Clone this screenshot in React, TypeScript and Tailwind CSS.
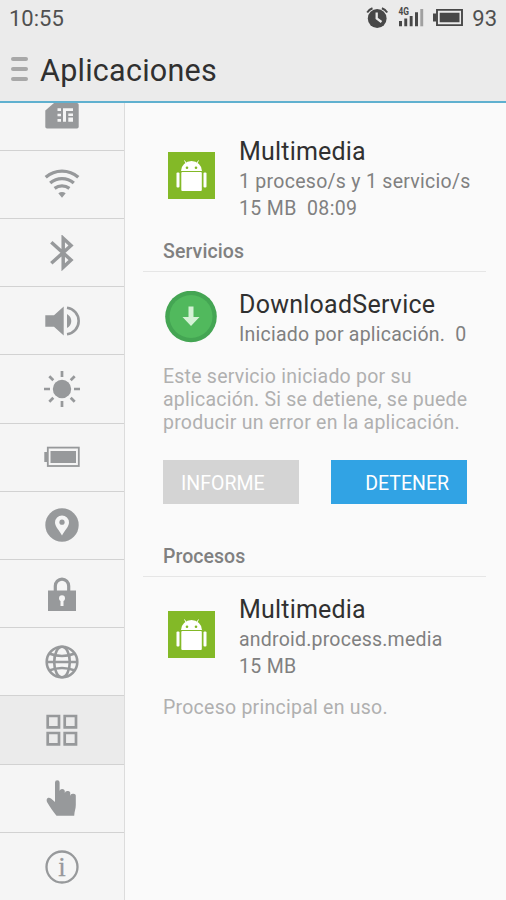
import React from "react";

const G = "#97999b";

const Svg = ({ children }: { children: React.ReactNode }) => (
  <svg width="36" height="36" viewBox="0 0 36 36" fill="none" className="block shrink-0">
    {children}
  </svg>
);

const icons: React.ReactNode[] = [
  <Svg key="sim">
    <path d="M10 5H33Q34.7 5 34.7 6.700V28.700Q34.700 30.400 33 30.400H3Q1.300 30.400 1.300 28.700V12.500Z" fill={G} />
    <path d="M13.500 10.300H17V13H13.500ZM13.500 15.700H17V18.300H13.500ZM13.500 21H17V23.700H13.500ZM19 10.300H29V13H22V23.700H19ZM24.300 15.500H29V18H24.300ZM24.300 19.500H29V23.700H24.300Z" fill="#f5f5f5" />
  </Svg>,
  <Svg key="wifi">
    <g stroke={G} strokeWidth="3.300">
      <path d="M1.700 11.300A24.800 24.800 0 0 1 34.300 11.300" />
      <path d="M6.200 17.100A18 18 0 0 1 29.800 17.100" />
      <path d="M10.600 22.300A12.500 12.500 0 0 1 25.400 22.300" />
    </g>
    <path d="M14.300 27.300Q18 24.800 21.700 27.300L18 31.800Z" fill={G} />
  </Svg>,
  <Svg key="bt">
    <path d="M7.300 7.300L27 25L19.200 32.300V3.300L27 10.500L7.300 28.300" stroke={G} strokeWidth="3.500" />
  </Svg>,
  <Svg key="vol">
    <path d="M1.300 12.200H10L19.700 3.500V32.500L10 23.800H1.300ZM23 11Q27.300 13.500 27.300 18T23 25Z" fill={G} />
    <path d="M23 4.800A13.300 13.300 0 0 1 23 31.200" stroke={G} strokeWidth="2.600" />
  </Svg>,
  <Svg key="sun">
    <circle cx="18" cy="18" r="9.200" fill={G} />
    <path d="M18 0V6M18 30V36M0 18H6M30 18H36M5.300 5.300L9.300 9.300M26.700 26.700L30.700 30.700M5.300 30.700L9.300 26.700M26.700 9.300L30.700 5.300" stroke={G} strokeWidth="2.700" />
  </Svg>,
  <Svg key="bat">
    <rect x="3.800" y="8.600" width="31" height="18.400" stroke={G} strokeWidth="1.800" />
    <path d="M0.300 13H3.300V23H0.300ZM6.500 12H32V24H6.500Z" fill={G} />
  </Svg>,
  <Svg key="pin">
    <circle cx="18" cy="18" r="16.700" fill={G} />
    <path d="M18 28.500C15.500 23.500 11 19.500 11 15.400A7 7 0 0 1 25 15.400C25 19.500 20.500 23.500 18 28.500Z" fill="#f5f5f5" />
    <circle cx="18" cy="15.200" r="2.600" fill={G} />
  </Svg>,
  <Svg key="lock">
    <path d="M11.300 15V10A6.700 6.900 0 0 1 24.700 10V15" stroke={G} strokeWidth="3.200" />
    <path d="M4 14.500H32V35H4Z" fill={G} />
    <circle cx="18" cy="22.300" r="3" fill="#f5f5f5" />
    <path d="M16.500 23H19.500V30H16.500Z" fill="#f5f5f5" />
  </Svg>,
  <Svg key="globe">
    <g stroke={G} strokeWidth="2.600">
      <circle cx="18" cy="18" r="15.300" />
      <ellipse cx="18" cy="18" rx="7.800" ry="15.300" />
      <path d="M2.500 18H33.500M5 9.500Q18 14.500 31 9.500M5 26.500Q18 21.500 31 26.500" />
    </g>
  </Svg>,
  <Svg key="grid">
    <path d="M3.700 4H15V15.300H3.700ZM20.700 4H32V15.300H20.700ZM3.700 21H15V32.300H3.700ZM20.700 21H32V32.300H20.700Z" stroke={G} strokeWidth="2.700" />
  </Svg>,
  <Svg key="hand">
    <path d="M11 2.500A2.300 2.300 0 0 1 15.600 2.500V11.500A2.500 2.500 0 0 1 20.800 11.500V13A2.500 2.300 0 0 1 26.200 14V15.800A2.700 2.300 0 0 1 31.800 16.500V25C31.800 29 30.500 31 30.200 35.700H12.500C9.500 32 6 27 3.300 22.500C1.500 19 4 16.500 7 18.500L11 22Z" fill={G} />
  </Svg>,
  <Svg key="info">
    <circle cx="18" cy="18" r="15.500" stroke={G} strokeWidth="2.300" />
    <text x="18" y="26.700" textAnchor="middle" fontSize="27" fontFamily="Liberation Serif, serif" fill={G} stroke={G} strokeWidth="0.300">i</text>
  </Svg>,
];

const Android = () => (
  <svg width="47" height="47" viewBox="0 0 47 47" className="block">
    <rect width="47" height="47" fill="#83b927" />
    <g fill="#fff">
      <path d="M13 19A10.500 10 0 0 1 34 19Z" />
      <rect x="13.300" y="20" width="20.500" height="19" rx="1" />
      <rect x="8.500" y="20.500" width="3" height="15" rx="1" />
      <rect x="35.500" y="20.500" width="3" height="15" rx="1" />
    </g>
    <path d="M16.500 8.500L18.500 12M30.500 8.500L28.500 12" stroke="#fff" strokeWidth="1" />
    <circle cx="19" cy="15.700" r="1.300" fill="#83b927" />
    <circle cx="28" cy="15.700" r="1.300" fill="#83b927" />
  </svg>
);

// Alarm, mobile signal and battery
const StatusIcons = () => (
  <svg className="ml-auto block" width="100" height="30" viewBox="0 0 100 30" fill="none">
    <circle cx="13.200" cy="15.500" r="9.400" fill="#484848" />
    <path d="M3.200 9.500A12 12 0 0 1 8.500 5.300M17.900 5.300A12 12 0 0 1 23.200 9.500" stroke="#484848" strokeWidth="2" />
    <path d="M12.700 9.500V15.500L17.500 19" stroke="#ebebeb" strokeWidth="2.300" />
    <text x="34.500" y="12.400" fontSize="10.500" fontWeight="700" textLength="10.500" lengthAdjust="spacingAndGlyphs" fill="#484848">4G</text>
    <path d="M35 18H38V23.300H35ZM40.300 15.500H43.200V23.300H40.300ZM45.700 13H48.600V23.300H45.700ZM51 9.300H54V23.300H51Z" fill="#484848" />
    <path d="M56.300 6H59.200V23.300H56.300Z" fill="#a0a0a0" />
    <path d="M73 6.900H98V22.100H73Z" stroke="#484848" strokeWidth="1.900" />
    <path d="M69 10.500H72.500V18.500H69ZM75.700 9.700H95.500V19.300H75.700Z" fill="#484848" />
  </svg>
);

export default function App() {
  return (
    <div className="flex h-[900px] w-[506px] flex-col overflow-hidden bg-[#fafafa] font-['Roboto',sans-serif] text-[19.500px] text-[#808080]">
      <header className="flex h-[103px] shrink-0 flex-col border-b-2 border-[#5fb0cf] bg-[#ebebeb]">
        <div className="flex h-9 items-center pr-[9px] pl-[9px] text-[22px] text-[#505050]">
          <span>10:55</span>
          <StatusIcons />
          <span className="ml-2">93</span>
        </div>
        <div className="flex h-[65px] items-center pl-[11px]">
          <div className="flex w-[17px] flex-col gap-[6px]">
            <i className="h-1 rounded-full bg-[#a8a8a8]" />
            <i className="h-1 rounded-full bg-[#a8a8a8]" />
            <i className="h-1 rounded-full bg-[#a8a8a8]" />
          </div>
          <h1 className="ml-3 pt-[5px] text-[30.500px] leading-9 tracking-[0.250px] text-[#303030]">Aplicaciones</h1>
        </div>
      </header>
      <div className="flex min-h-0 flex-1">
        <nav className="flex w-[125px] shrink-0 flex-col overflow-hidden border-r border-[#dcdcdc] bg-[#f5f5f5]">
          {icons.map((icon, i) => (
            <div
              key={i}
              className={`flex h-[68.220px] shrink-0 items-center justify-center border-b border-[#d2d2d2] ${i === 0 ? "-mt-[20.500px]" : ""} ${i === 9 ? "bg-[#ebebeb]" : ""}`}
            >
              {icon}
            </div>
          ))}
        </nav>
        <main className="flex flex-1 flex-col pl-[38px]">
          <section className="flex h-[135px] pt-[33px]">
            <div className="mt-[16px] ml-[5px] w-[71px]"><Android /></div>
            <div className="whitespace-pre">
              <h2 className="h-8 text-[25px] leading-8 tracking-[0.200px] text-[#303030]">Multimedia</h2>
              <p className="h-[26.500px] leading-[27px] tracking-[0.280px]">1 proceso/s y 1 servicio/s</p>
              <p className="h-[27px] leading-[27px] tracking-[0.350px]">15 MB  08:09</p>
            </div>
          </section>
          <h3 className="h-[33px] leading-[27px] font-medium tracking-[0.100px]">Servicios</h3>
          <hr className="-ml-5 w-[343px] border-[#e6e6e6]" />
          <section className="flex h-[93px] pt-[17px]">
            <svg className="mt-[2px] mr-[22px] ml-[2px] block" width="52" height="52" viewBox="0 0 52 52">
              <circle cx="26" cy="25.500" r="25.800" fill="#44a553" />
              <circle cx="26" cy="25.500" r="21.500" fill="#51b95d" />
              <path d="M23.500 15.500H28.500V26H34.500L26 35L17.500 26H23.500Z" fill="#d5f2d6" />
            </svg>
            <div className="whitespace-pre">
              <h2 className="h-8 text-[25px] leading-8 tracking-[0.250px] text-[#303030]">DownloadService</h2>
              <p className="h-[27px] leading-[27px] tracking-[0.230px]">Iniciado por aplicación.  0</p>
            </div>
          </section>
          <p className="h-[95px] leading-[23.200px] tracking-[0.230px] text-[#b0b0b0]">
            Este servicio iniciado por su<br />aplicación. Si se detiene, se puede<br />producir un error en la aplicación.
          </p>
          <div className="flex h-[83px] gap-[31.500px] text-white">
            <button className="h-[44px] w-[136px] bg-[#d4d4d4] pt-[3px] pl-[18px] text-left">INFORME</button>
            <button className="h-[44px] w-[136.500px] bg-[#31a3e4] pt-[3px] pr-[18px] text-right">DETENER</button>
          </div>
          <h3 className="h-[33px] leading-[27px] font-medium tracking-[0.050px]">Procesos</h3>
          <hr className="-ml-5 w-[343px] border-[#e6e6e6]" />
          <section className="flex h-[117px] pt-[17px]">
            <div className="mt-[17px] ml-[5px] w-[71px]"><Android /></div>
            <div className="whitespace-pre">
              <h2 className="h-8 text-[25px] leading-8 tracking-[0.200px] text-[#303030]">Multimedia</h2>
              <p className="h-[27px] leading-[27px] tracking-[0.220px]">android.process.media</p>
              <p className="h-[27px] leading-[27px] tracking-[0.300px]">15 MB</p>
            </div>
          </section>
          <p className="leading-[27px] tracking-[0.250px] text-[#b0b0b0]">Proceso principal en uso.</p>
        </main>
      </div>
    </div>
  );
}
